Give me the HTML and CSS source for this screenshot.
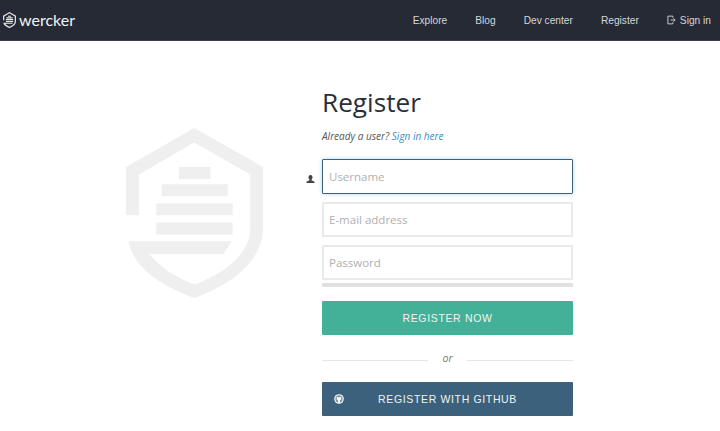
FILE: index.html
```html
<!DOCTYPE html>
<html lang="en">
<head>
  <meta charset="UTF-8">
  <meta name="viewport" content="width=device-width, initial-scale=1.0">
  <title>Register - wercker</title>
  <link rel="stylesheet" href="styles.css">
</head>
<body>
  <header class="topbar">
    <a class="brand" href="#">
      <svg class="brand-icon" viewBox="0 0 137 170" aria-hidden="true">
        <path class="shield" d="M68.300 0 137 39 137 100.300C137 130 110 155 68.300 170 30 156 8 138 2.300 113.300L106 113.300 97.300 126 23.300 126C34 140 50 149 68.300 156.600 100 145 124.300 125 124.300 100.300L124.300 46.600 68.300 14.600 13 46.600 13 87.300 0 87.300 0 39Z"/>
        <path class="shield" d="M53 39h31.300v12H53zM35.700 56.300h66v12h-66zM30.300 75.300h76.400v12H30.300zM30.300 94.600h76.400v12H30.300z"/>
      </svg>
      <span class="brand-name">wercker</span>
    </a>
    <nav class="nav">
      <a href="#">Explore</a>
      <a href="#">Blog</a>
      <a href="#">Dev center</a>
      <a href="#">Register</a>
      <a href="#" class="signin">
        <svg class="signin-icon" viewBox="0 0 10 10" aria-hidden="true">
          <path d="M6.500 2.500V.7H1v8.600h5.500V7.500M4 5h5M7.200 3.200 9 5 7.200 6.800"/>
        </svg>
        Sign in
      </a>
    </nav>
  </header>

  <main class="page">
    <div class="art">
      <svg class="art-shield" viewBox="0 0 137 170" aria-hidden="true">
        <path class="shield-big" d="M68.300 0 137 39 137 100.300C137 130 110 155 68.300 170 30 156 8 138 2.300 113.300L106 113.300 97.300 126 23.300 126C34 140 50 149 68.300 156.600 100 145 124.300 125 124.300 100.300L124.300 46.600 68.300 14.600 13 46.600 13 87.300 0 87.300 0 39Z"/>
        <path class="shield-big" d="M53 39h31.300v12H53zM35.700 56.300h66v12h-66zM30.300 75.300h76.400v12H30.300zM30.300 94.600h76.400v12H30.300z"/>
      </svg>
    </div>

    <form class="form">
      <h1>Register</h1>
      <p class="already">Already a user? <a href="#">Sign in here</a></p>

      <div class="field">
        <svg class="field-icon" viewBox="0 0 10 10" aria-hidden="true">
          <path d="M5 .5C6.400.5 7.200 1.500 7.200 3S6.500 5.300 6.100 5.700V6.500L9.500 8V9.500H.5V8L3.900 6.500V5.700C3.500 5.300 2.800 4.500 2.800 3S3.600.5 5 .5Z"/>
        </svg>
        <input type="text" class="input input-focus" placeholder="Username">
      </div>
      <div class="field">
        <input type="text" class="input" placeholder="E-mail address">
      </div>
      <div class="field field-last">
        <input type="password" class="input" placeholder="Password">
      </div>
      <div class="strength"></div>

      <button type="button" class="btn btn-green">REGISTER NOW</button>

      <div class="divider"><span>or</span></div>

      <button type="button" class="btn btn-blue">
        <svg class="gh-icon" viewBox="0 0 10 10" aria-hidden="true">
          <circle cx="5" cy="5" r="4.800" fill="#fff"/>
          <circle cx="5" cy="5" r="3.700" fill="#7d97a8"/>
          <path fill="#fff" d="M2.900 2.800 3.900 3.300H6.100L7.100 2.800 7.300 4.500C7.300 5.500 6.600 6 5.900 6.200V9H4.100V6.200C3.400 6 2.700 5.500 2.700 4.500Z"/>
        </svg>
        REGISTER WITH GITHUB
      </button>
    </form>
  </main>
</body>
</html>
```

FILE: styles.css
```css
* {
  box-sizing: border-box;
}
html, body {
  height: 100%;
}
body {
  margin: 0;
  background: #fff;
  font-family: "Open Sans", sans-serif;
  overflow: hidden;
}
a {
  text-decoration: none;
}
.topbar {
  display: flex;
  justify-content: space-between;
  align-items: center;
  height: 41px;
  padding: 0 9px 0 3px;
  background: #262a35;
  border-bottom: 1px solid #3a3e48;
}
.brand {
  display: flex;
  align-items: center;
  gap: 3px;
  color: #f2f3f4;
}
.brand-icon {
  width: 13px;
  height: 16px;
}
.shield {
  fill: #e8e9ea;
}
.brand-name {
  font-family: Lato, sans-serif;
  font-size: 16px;
  line-height: 20px;
}
.nav {
  display: flex;
  gap: 28px;
  font-family: "Liberation Sans", Arial, sans-serif;
  font-size: 10.200px;
}
.nav a {
  color: #d5d7da;
}
.signin {
  display: flex;
  align-items: center;
  gap: 4px;
}
.signin-icon {
  width: 9px;
  height: 10px;
  fill: none;
  stroke: #d5d7da;
  stroke-width: 1;
}
.page {
  display: flex;
}
.art {
  width: 322px;
  padding: 87px 0 0 126px;
}
.art-shield {
  display: block;
  width: 137px;
  height: 170px;
}
.shield-big {
  fill: #efefef;
}
.form {
  width: 251px;
}
h1 {
  margin: 42px 0 0;
  font-size: 26.200px;
  font-weight: 400;
  line-height: 38px;
  color: #2a2e38;
}
.already {
  margin: 7px 0 15px;
  font-size: 10px;
  font-style: italic;
  line-height: 16px;
  color: #555;
}
.already a {
  color: #3a8fc0;
}
.field {
  position: relative;
  margin-bottom: 8px;
}
.field-last {
  margin-bottom: 3px;
}
.field-icon {
  position: absolute;
  left: -16px;
  top: 15px;
  width: 9px;
  height: 10px;
  fill: #444;
}
.input {
  display: block;
  width: 100%;
  height: 35px;
  padding: 0 5px;
  border: 2px solid #eaeaea;
  border-radius: 1px;
  background: #fff;
  font-family: "Open Sans", sans-serif;
  font-size: 11.500px;
  color: #333;
  outline: none;
}
.input::placeholder {
  color: #b0b0b0;
  opacity: 1;
}
.input-focus {
  padding: 0 6px;
  border: 1px solid #3e6078;
  box-shadow: 0 0 4px #a8d8f5;
}
.strength {
  height: 4px;
  margin-bottom: 14px;
  border-radius: 1px;
  background: #e0e0e0;
}
.btn {
  display: block;
  position: relative;
  width: 100%;
  height: 34px;
  padding-bottom: 2px;
  border: none;
  border-radius: 1px;
  color: #f0f4f4;
  font-family: "Liberation Sans", Arial, sans-serif;
  font-size: 10.500px;
  letter-spacing: 0.650px;
}
.btn-green {
  background: #43b197;
}
.btn-blue {
  background: #3b617c;
}
.gh-icon {
  position: absolute;
  left: 12px;
  top: 12px;
  width: 10px;
  height: 10px;
}
.divider {
  display: flex;
  align-items: center;
  gap: 14px;
  height: 47px;
  font-size: 10.500px;
  font-style: italic;
  color: #777;
}
.divider span {
  margin-bottom: 2px;
}
.divider::before, .divider::after {
  content: "";
  flex: 1;
  height: 1px;
  margin-top: 3px;
  background: #e6e6e6;
}
```
